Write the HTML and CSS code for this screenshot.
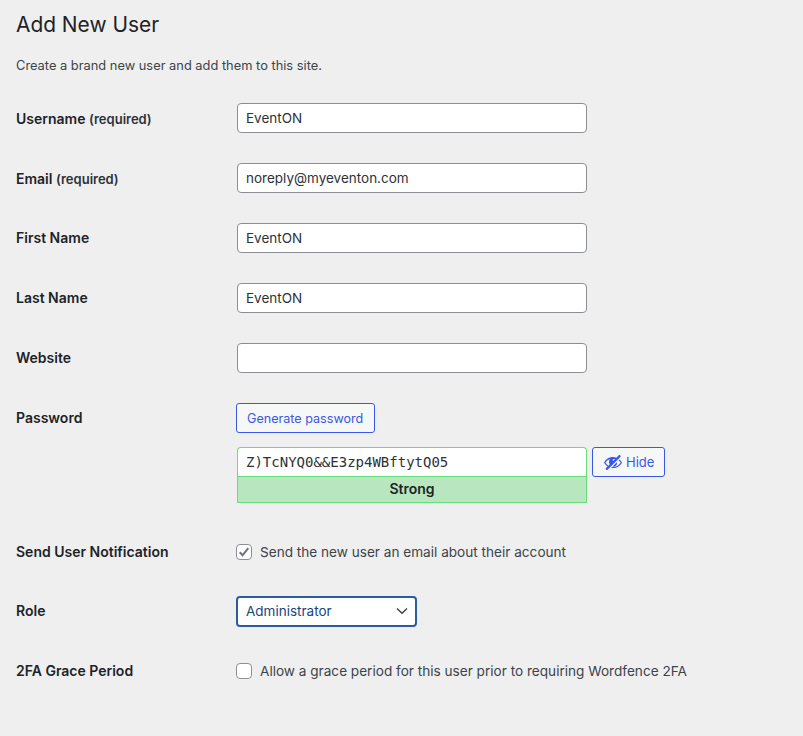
FILE: index.html
```html
<!DOCTYPE html>
<html lang="en">
<head>
<meta charset="utf-8">
<title>Add New User</title>
<link rel="stylesheet" href="styles.css">
</head>
<body>
<main class="page">
  <h1 class="title">Add New User</h1>
  <p class="intro">Create a brand new user and add them to this site.</p>
  <form class="form">
    <div class="row"><label class="label label-req">Username <span class="req">(required)</span></label><input class="field" type="text" value="EventON"></div>
    <div class="row"><label class="label label-req">Email <span class="req">(required)</span></label><input class="field" type="text" value="noreply@myeventon.com"></div>
    <div class="row"><label class="label">First Name</label><input class="field" type="text" value="EventON"></div>
    <div class="row"><label class="label">Last Name</label><input class="field" type="text" value="EventON"></div>
    <div class="row"><label class="label">Website</label><input class="field" type="text"></div>
    <div class="row row-password">
      <label class="label">Password</label>
      <div class="pw">
        <button type="button" class="btn btn-generate">Generate password</button>
        <div class="pw-line">
          <div class="pw-box">
            <input class="pw-input" type="text" value="Z)TcNYQ0&amp;&amp;E3zp4WBftytQ05">
            <div class="strength">Strong</div>
          </div>
          <button type="button" class="btn btn-hide">
            <svg class="eye" viewBox="0 0 20 20" width="20" height="20" aria-hidden="true"><path d="M17.2 3.3l.16.17c.39.39.39 1.02 0 1.41L4.55 17.7c-.39.39-1.03.39-1.41 0l-.17-.17c-.39-.39-.39-1.02 0-1.41l1.59-1.6c-1.57-1-2.76-2.3-3.56-3.93.81-1.65 2.03-2.98 3.64-3.99S8.04 5.09 10 5.09c1.2 0 2.33.21 3.4.6l2.38-2.39c.39-.39 1.03-.39 1.42 0zm-7.09 4.01c-.23.25-.34.54-.34.88 0 .31.12.58.31.81l1.8-1.79c-.13-.12-.28-.21-.45-.26-.11-.01-.28-.03-.49-.04-.33.03-.6.16-.83.4zM2.4 10.59c.69 1.23 1.71 2.25 3.05 3.05l1.28-1.28c-.51-.69-.77-1.47-.77-2.36 0-1.06.36-1.98 1.09-2.76-1.04.27-1.96.7-2.76 1.26-.8.58-1.43 1.27-1.89 2.09zm13.22-2.13l.96-.96c1.02.86 1.83 1.89 2.42 3.09-.81 1.65-2.03 2.98-3.64 3.99s-3.4 1.51-5.36 1.51c-.63 0-1.24-.07-1.83-.18l1.07-1.07c.25.02.5.05.76.05 1.63 0 3.13-.4 4.5-1.21s2.41-1.84 3.2-3.09c-.54-.87-1.2-1.6-2.08-2.13zm-4.82 4.81l3.06-3.06c.13.3.2.63.2.97 0 .98-.38 1.81-1.13 2.5-.75.68-1.65 1.02-2.7 1.02-.12 0-.23 0-.34-.01z"/></svg>
            Hide
          </button>
        </div>
      </div>
    </div>
    <div class="row row-check"><label class="label">Send User Notification</label><label class="check"><span class="box"><svg viewBox="0 0 16 16" width="16" height="16" aria-hidden="true"><path d="M3.700 8.200 6.600 11.300 12.300 4.100" fill="none" stroke="#6f7378" stroke-width="2"/></svg></span>Send the new user an email about their account</label></div>
    <div class="row row-role"><label class="label label-role">Role</label><div class="select">Administrator<svg viewBox="0 0 16 16" width="16" height="16" aria-hidden="true"><path d="M3 5.500 8 10.300 13 5.500" fill="none" stroke="#3c434a" stroke-width="1.400"/></svg></div></div>
    <div class="row row-check"><label class="label">2FA Grace Period</label><label class="check"><span class="box"></span>Allow a grace period for this user prior to requiring Wordfence 2FA</label></div>
  </form>
</main>
</body>
</html>
```
FILE: styles.css
```css
* { box-sizing: border-box; }
html, body { margin: 0; padding: 0; }
body {
  width: 803px;
  height: 736px;
  overflow: hidden;
  background: #efefef;
  color: #1d2327;
  font-family: Inter, "Liberation Sans", sans-serif;
  font-size: 13px;
}
.page { padding: 12px 0 0 16px; }
.title {
  margin: 0;
  font-size: 20.9px;
  font-weight: 400;
  line-height: 26px;
}
.intro {
  margin: 19px 0 0;
  font-size: 12.85px;
  line-height: 18px;
  color: #3c434a;
}
.form { margin-top: 28px; display: flex; flex-direction: column; }
.row {
  display: grid;
  grid-template-columns: 221px 1fr;
  align-items: center;
  height: 30px;
  margin-bottom: 30px;
}
.label { font-size: 14px; font-weight: 600; color: #1d2327; margin-top: -2px; }
.label-req { margin-top: 0; }
.req { font-weight: 600; font-size: 13px; color: #2c3338; }
.field {
  width: 350px;
  height: 30px;
  padding: 0 8px;
  border: 1px solid #8c8f94;
  border-radius: 4px;
  background: #fff;
  color: #2c3338;
  font: 13.5px Inter, sans-serif;
}
.row-password { height: auto; align-items: start; margin-bottom: 34px; }
.row-password .label { line-height: 30px; margin-top: 0; }
.pw { display: flex; flex-direction: column; gap: 14px; align-items: flex-start; }
.btn {
  display: inline-flex;
  align-items: center;
  height: 30px;
  padding: 0 10px;
  border: 1px solid #3858e9;
  border-radius: 3px;
  background: #f6f7f7;
  color: #3858e9;
  font: 13px Inter, sans-serif;
}
.btn-generate { font-size: 12.6px; margin-left: -1px; padding: 0 11px 0 10px; }
.pw-line { display: flex; gap: 5px; align-items: flex-start; }
.pw-box { width: 350px; }
.pw-input {
  display: block;
  width: 350px;
  height: 29px;
  padding: 0 8px;
  border: 1px solid #68de7c;
  border-bottom: 0;
  border-radius: 4px 4px 0 0;
  background: #fff;
  color: #2c3338;
  font: 14px "DejaVu Sans Mono", monospace;
}
.strength {
  height: 27px;
  line-height: 24px;
  border: 1px solid #68de7c;
  background: #b8e6bf;
  text-align: center;
  font-size: 14px;
  font-weight: 600;
  color: #1d2327;
}
.btn-hide { width: 73px; gap: 3px; padding: 0 0 0 10px; }
.eye { fill: #3858e9; flex: none; }
.row-check { margin-bottom: 29px; }
.row-role { margin-bottom: 30px; }
.check { display: flex; align-items: center; gap: 8px; font-size: 13.6px; color: #3c434a; }
.box {
  width: 16px;
  height: 16px;
  margin-left: -1px;
  border: 1px solid #8c8f94;
  border-radius: 4px;
  background: #fff;
  display: block;
}
.box svg { display: block; margin: -1px; }
.select {
  width: 181px;
  height: 31px;
  margin-left: -1px;
  padding: 0 5px 2px 8px;
  display: flex;
  align-items: center;
  justify-content: space-between;
  border: 2px solid #2a5c9f;
  border-radius: 4px;
  background: #fff;
  color: #1a4480;
  font-size: 13.5px;
}
```
